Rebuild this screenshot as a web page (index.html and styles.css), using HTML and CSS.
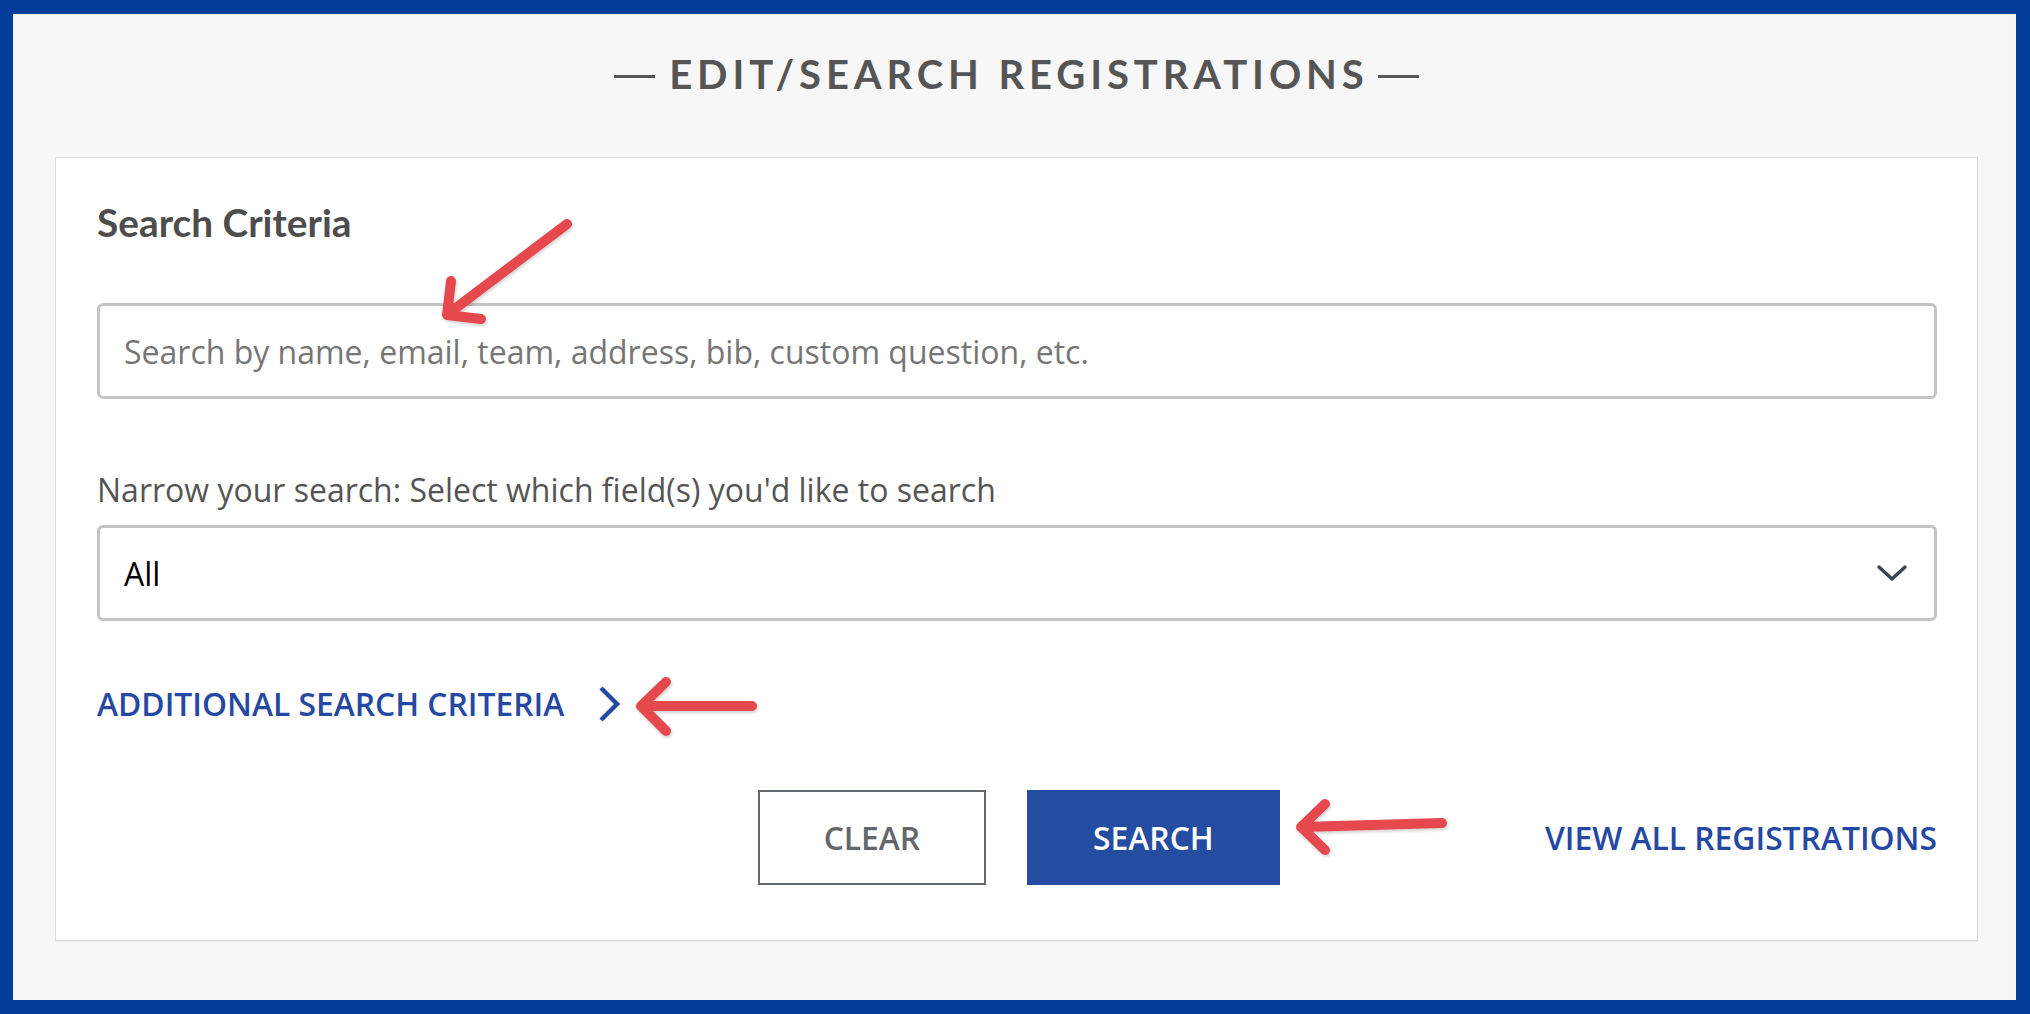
FILE: index.html
```html
<!DOCTYPE html>
<html lang="en">
<head>
<meta charset="utf-8">
<title>Edit/Search Registrations</title>
<link rel="stylesheet" href="styles.css">
</head>
<body>
<div class="frame">
  <h1 class="page-title"><span class="title-dash"></span><span class="title-text">EDIT/SEARCH REGISTRATIONS</span><span class="title-dash"></span></h1>
  <section class="card">
    <h2 class="card-title">Search Criteria</h2>
    <input class="search-input" type="text" placeholder="Search by name, email, team, address, bib, custom question, etc.">
    <label class="field-label">Narrow your search: Select which field(s) you'd like to search</label>
    <div class="select-box">
      <span class="select-value">All</span>
      <svg class="select-chevron" width="32" height="20" viewBox="0 0 32 20"><polyline points="3,4 16,16 29,4" fill="none" stroke="#3b4650" stroke-width="3.5" stroke-linecap="round" stroke-linejoin="round"/></svg>
    </div>
    <div class="additional">
      <span class="additional-text">ADDITIONAL SEARCH CRITERIA</span>
      <svg class="additional-chevron" width="26" height="38" viewBox="0 0 26 38"><polyline points="5,3 21,19 5,35" fill="none" stroke="#2548a2" stroke-width="4.5" stroke-linejoin="miter"/></svg>
    </div>
    <div class="actions">
      <button class="btn btn-clear">CLEAR</button>
      <button class="btn btn-search">SEARCH</button>
      <a class="view-all">VIEW ALL REGISTRATIONS</a>
    </div>
  </section>
  <svg class="annotations" width="2030" height="1014" viewBox="0 0 2030 1014">
    <defs>
      <filter id="sh" x="-20%" y="-20%" width="140%" height="140%">
        <feDropShadow dx="1" dy="2" stdDeviation="1.5" flood-color="#000" flood-opacity="0.18"/>
      </filter>
    </defs>
    <g fill="none" stroke="#e5484d" stroke-width="10" stroke-linecap="round" stroke-linejoin="round" filter="url(#sh)">
      <path d="M567,224 L448,314 M451,281 L447,315 L481,319"/>
      <path d="M752,706 L642,706 M666,682 L641,706 L666,731"/>
      <path d="M1442,823 L1302,827 M1325,804 L1301,827 L1325,850"/>
    </g>
  </svg>
</div>
</body>
</html>
```
FILE: styles.css
```css
* { box-sizing: border-box; }
html, body { margin: 0; padding: 0; }
body {
  width: 2030px;
  height: 1014px;
  font-family: "Open Sans", "Liberation Sans", sans-serif;
  background: #023e98;
}
.frame {
  position: relative;
  width: 2030px;
  height: 1014px;
  border: 14px solid #023e98;
  border-left-width: 13px;
  background: #f7f7f7;
  padding: 0 38px 0 42px;
  display: flex;
  flex-direction: column;
}
.page-title {
  margin: 36px 0 59px;
  height: 48px;
  display: flex;
  justify-content: center;
  align-items: center;
  gap: 14px;
  font-family: "Lato", "Open Sans", sans-serif;
  font-weight: 700;
  font-size: 40px;
  color: #555555;
}
.title-dash {
  display: block;
  width: 41px;
  height: 3px;
  margin-top: 4px;
  background: #555555;
}
.title-text {
  line-height: 48px;
  letter-spacing: 4.9px;
  margin-right: -4.9px;
}
.card {
  background: #ffffff;
  border: 1px solid #dddddd;
  box-shadow: 0 1px 1px rgba(0,0,0,0.04);
  padding: 44px 40px 55px 41px;
  display: flex;
  flex-direction: column;
}
.card-title {
  margin: 0;
  height: 40px;
  line-height: 40px;
  font-family: "Lato", "Open Sans", sans-serif;
  font-weight: 700;
  font-size: 38.8px;
  color: #4d4d4d;
}
.search-input {
  margin-top: 61px;
  height: 96px;
  width: 100%;
  border: 3px solid #c4c4c4;
  border-radius: 6px;
  padding: 0 24px;
  font-family: "Open Sans", sans-serif;
  font-size: 32px;
  color: #333;
  outline: none;
}
.search-input::placeholder { color: #767676; }
.field-label {
  margin-top: 73px;
  height: 36px;
  line-height: 36px;
  font-size: 32px;
  color: #555555;
}
.select-box {
  margin-top: 17px;
  height: 96px;
  border: 3px solid #c4c4c4;
  border-radius: 6px;
  padding: 0 26px 0 24px;
  display: flex;
  align-items: center;
  justify-content: space-between;
}
.select-value {
  font-size: 32px;
  color: #000;
}
.select-chevron { display: block; }
.additional {
  margin-top: 65px;
  height: 36px;
  display: flex;
  align-items: center;
  gap: 32px;
}
.additional-text {
  font-size: 31.8px;
  font-weight: 600;
  color: #2548a2;
  line-height: 36px;
}
.additional-chevron { display: block; }
.actions {
  margin-top: 68px;
  display: flex;
  justify-content: flex-end;
  align-items: center;
}
.btn {
  height: 95px;
  font-family: "Open Sans", sans-serif;
  font-size: 31.8px;
  font-weight: 600;
  cursor: pointer;
}
.btn-clear {
  width: 228px;
  background: #fff;
  border: 2px solid #666a6e;
  color: #63676b;
}
.btn-search {
  width: 253px;
  margin-left: 41px;
  background: #244ca1;
  border: none;
  color: #ffffff;
}
.view-all {
  margin-left: 265px;
  font-size: 31.8px;
  font-weight: 600;
  color: #2548a2;
}
.annotations {
  position: absolute;
  left: -13px;
  top: -14px;
  pointer-events: none;
}
```
